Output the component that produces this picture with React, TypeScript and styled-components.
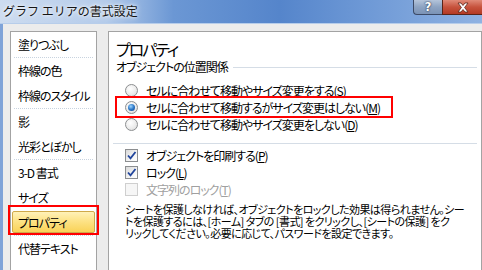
import React from "react";
import styled, { createGlobalStyle, css } from "styled-components";

const GlobalStyle = createGlobalStyle`
    html, body {
        margin: 0;
        padding: 0;
        width: 482px;
        height: 270px;
        overflow: hidden;
        background: #ececec;
    }
    body {
        font-family: "Noto Sans CJK JP", "Noto Sans", sans-serif;
        font-size: 12px;
        color: #000;
    }
`;

const categories = [
    { label: "塗りつぶし", sep: true },
    { label: "枠線の色" },
    { label: "枠線のスタイル", sep: true },
    { label: "影" },
    { label: "光彩とぼかし", sep: true },
    { label: "3-D 書式" },
    { label: "サイズ" },
    { label: "プロパティ", active: true, sep: true },
    { label: "代替テキスト" },
];

const Mnemonic = ({ k }: { k: string }) => (
    <>(<U>{k}</U>)</>
);

const App = () => {
    return (
        <Window>
            <GlobalStyle />
            <TitleBar>
                <Title>グラフ エリアの書式設定</Title>
                <TitleButtons>
                    <HelpButton>?</HelpButton>
                    <CloseButton>
                        <svg width="14" height="11" viewBox="0 0 14 11">
                            <path
                                d="M2 1h3l2 2.5L9 1h3L8.6 5.5 12 10H9L7 7.5 5 10H2l3.4-4.5z"
                                fill="#fff"
                                stroke="#5a2418"
                                strokeWidth="0.8"
                            />
                        </svg>
                    </CloseButton>
                </TitleButtons>
            </TitleBar>

            <Body>
                <CategoryPanel>
                    {categories.map((c) => (
                        <React.Fragment key={c.label}>
                            <CategoryItem>
                                <CategoryInner $active={c.active}>{c.label}</CategoryInner>
                                {c.active && <CategoryMark />}
                            </CategoryItem>
                            {c.sep && <CategorySeparator />}
                        </React.Fragment>
                    ))}
                </CategoryPanel>

                <ContentPanel>
                    <Heading>プロパティ</Heading>

                    <SectionHeader>
                        <span>オブジェクトの位置関係</span>
                        <SectionLine />
                    </SectionHeader>

                    <OptionGroup>
                        <OptionRow>
                            <Radio />
                            <span>セルに合わせて移動やサイズ変更をする<Mnemonic k="S" /></span>
                        </OptionRow>
                        <OptionRow>
                            <Radio $checked />
                            <span>セルに合わせて移動するがサイズ変更はしない<Mnemonic k="M" /></span>
                            <RowMark />
                        </OptionRow>
                        <OptionRow>
                            <Radio />
                            <span>セルに合わせて移動やサイズ変更をしない<Mnemonic k="D" /></span>
                        </OptionRow>
                    </OptionGroup>

                    <Divider />

                    <CheckGroup>
                        <OptionRow>
                            <Checkbox $checked>
                                <CheckMark />
                            </Checkbox>
                            <span>オブジェクトを印刷する<Mnemonic k="P" /></span>
                        </OptionRow>
                        <OptionRow>
                            <Checkbox $checked>
                                <CheckMark />
                            </Checkbox>
                            <span>ロック<Mnemonic k="L" /></span>
                        </OptionRow>
                        <OptionRow $disabled>
                            <Checkbox $disabled />
                            <span>文字列のロック<Mnemonic k="T" /></span>
                        </OptionRow>
                    </CheckGroup>

                    <Note>
                        シートを保護しなければ、オブジェクトをロックした効果は得られません。シー
                        <br />
                        トを保護するには、[ホーム] タブの [書式] をクリックし、[シートの保護] をク
                        <br />
                        リックしてください。必要に応じて、パスワードを設定できます。
                    </Note>
                </ContentPanel>
            </Body>
        </Window>
    );
};

const CheckMark = () => (
    <svg width="11" height="11" viewBox="0 0 11 11">
        <path d="M2 5.5l2.5 2.8L9.5 2" fill="none" stroke="#21459c" strokeWidth="1.8" />
    </svg>
);

const Window = styled.div`
    width: 482px;
    height: 270px;
    display: flex;
    flex-direction: column;
    overflow: hidden;
`;

const TitleBar = styled.div`
    height: 23px;
    flex: none;
    display: flex;
    justify-content: space-between;
    align-items: flex-start;
    background: linear-gradient(90deg, #cddcf0 0%, #b4cbea 22%, #6b97d4 36%, #5585cb 58%, #6e99d6 76%, #8fb2e2 100%);
    border-bottom: 1px solid #b7cdea;
`;

const Title = styled.div`
    padding-left: 3px;
    line-height: 22px;
    font-size: 12px;
    color: #151515;
    text-shadow: 0 0 6px #fff, 0 0 3px #fff;
    white-space: nowrap;
`;

const TitleButtons = styled.div`
    display: flex;
`;

const titleButton = css`
    height: 15px;
    box-sizing: border-box;
    display: flex;
    align-items: center;
    justify-content: center;
    border: 1px solid #3c4a66;
    border-top: none;
`;

const HelpButton = styled.div`
    ${titleButton};
    width: 29px;
    border-radius: 0 0 0 4px;
    border-right: none;
    background: linear-gradient(#b4c4da, #8da3c2 50%, #7b93b6);
    color: #fff;
    font-family: "DejaVu Sans", sans-serif;
    font-weight: bold;
    font-size: 12px;
    text-shadow: 0 0 2px #2a3550, 0 0 1px #2a3550;
`;

const CloseButton = styled.div`
    ${titleButton};
    width: 40px;
    border-color: #5a2418;
    border-right: none;
    background: linear-gradient(#e08a78, #c7533d 50%, #b43a24);
`;

const Body = styled.div`
    flex: 1;
    min-height: 0;
    display: flex;
    gap: 11px;
    padding: 7px 0 0 7px;
    border-left: 3px solid #7fa3d8;
    background: #ececec;
`;

const CategoryPanel = styled.div`
    width: 87px;
    flex: none;
    box-sizing: border-box;
    border: 1px solid #a3a3a3;
    border-bottom: none;
    background: #fff;
`;

const CategoryItem = styled.div`
    position: relative;
    height: 25px;
    box-sizing: border-box;
    padding: 1px 1px 2px 1px;
    display: flex;
`;

const CategoryInner = styled.div<{ $active?: boolean }>`
    flex: 1;
    display: flex;
    align-items: center;
    padding-left: 5px;
    border: 1px solid transparent;
    border-radius: 2px;
    font-feature-settings: "palt";
    letter-spacing: -1px;
    white-space: nowrap;
    ${(p) =>
        p.$active &&
        css`
            background: linear-gradient(#fff1b8, #fde387 45%, #f9d257);
            border-color: #cfa94a;
        `}
`;

const CategoryMark = styled.div`
    position: absolute;
    left: -3px;
    right: -3px;
    top: -5px;
    bottom: 0;
    border: 2px solid #f00;
`;

const CategorySeparator = styled.div`
    height: 0;
    margin: 0 3px;
    border-top: 1px dotted #c8d3df;
`;

const ContentPanel = styled.div`
    flex: 1;
    box-sizing: border-box;
    border: 1px solid #a3a3a3;
    border-bottom: none;
    background: #fff;
    padding: 6px 4px 0 7px;
    font-feature-settings: "palt";
    letter-spacing: -1px;
    white-space: nowrap;
`;

const Heading = styled.div`
    font-size: 16px;
    line-height: 22px;
    letter-spacing: -2px;
`;

const SectionHeader = styled.div`
    display: flex;
    align-items: center;
    gap: 5px;
    height: 14px;
    line-height: 14px;
`;

const SectionLine = styled.div`
    flex: 1;
    height: 1px;
    background: #d5dde6;
`;

const OptionGroup = styled.div`
    margin-top: 8px;
    padding-left: 9px;
`;

const OptionRow = styled.div<{ $disabled?: boolean }>`
    position: relative;
    height: 17px;
    display: flex;
    align-items: center;
    gap: 8px;
    color: ${(p) => (p.$disabled ? "#a0a0a0" : "#000")};
`;

const RowMark = styled.div`
    position: absolute;
    left: -10px;
    width: 278px;
    top: -3px;
    height: 22px;
    box-sizing: border-box;
    border: 2px solid #f00;
`;

const Radio = styled.span<{ $checked?: boolean }>`
    position: relative;
    width: 13px;
    height: 13px;
    flex: none;
    box-sizing: border-box;
    border-radius: 50%;
    border: 1px solid #8c8e90;
    background: radial-gradient(circle at 40% 35%, #fff 0%, #eaeaea 60%, #d2d2d2 100%);

    ${(p) =>
        p.$checked &&
        css`
            &::after {
                content: "";
                position: absolute;
                left: 2px;
                top: 2px;
                width: 7px;
                height: 7px;
                border-radius: 50%;
                background: radial-gradient(circle at 40% 35%, #9fd6ff 0%, #2c78c8 50%, #0d3e82 100%);
            }
        `}
`;

const Divider = styled.div`
    height: 1px;
    margin: 10px 0 0 -3px;
    background: #d5dde6;
`;

const CheckGroup = styled.div`
    margin-top: 3px;
    padding-left: 9px;
`;

const Checkbox = styled.span<{ $checked?: boolean; $disabled?: boolean }>`
    width: 13px;
    height: 13px;
    flex: none;
    box-sizing: border-box;
    display: flex;
    align-items: center;
    justify-content: center;
    border: 1px solid ${(p) => (p.$disabled ? "#cfcfcf" : "#8c8e90")};
    background: ${(p) =>
        p.$disabled ? "#f6f6f6" : "linear-gradient(135deg, #d9d9d9, #f4f4f4 60%, #fff)"};
`;

const Note = styled.div`
    margin-top: 5px;
    padding-left: 9px;
    line-height: 12px;
    font-size: 11px;
    letter-spacing: -0.55px;
`;

const U = styled.span`
    text-decoration: underline;
`;

export default App;
